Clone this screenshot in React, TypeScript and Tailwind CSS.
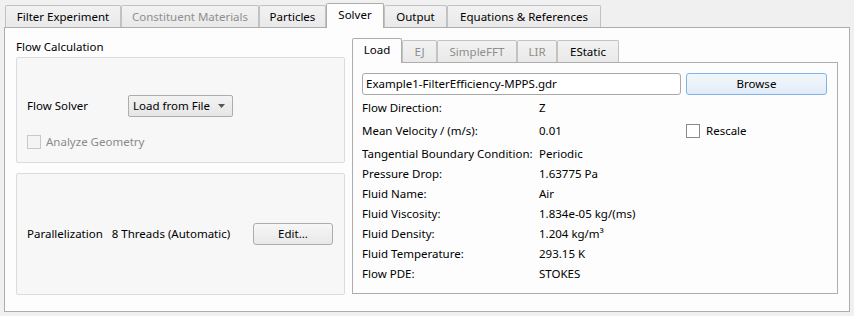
import React from 'react';

type Tab = { label: string; width: string; selected?: boolean; disabled?: boolean };

const mainTabs: Tab[] = [
  { label: 'Filter Experiment', width: 'w-[116px]' },
  { label: 'Constituent Materials', width: 'w-[138px]', disabled: true },
  { label: 'Particles', width: 'w-[67px]' },
  { label: 'Solver', width: 'w-[58px]', selected: true },
  { label: 'Output', width: 'w-[63px]' },
  { label: 'Equations & References', width: 'w-[154px]' },
];

const innerTabs: Tab[] = [
  { label: 'Load', width: 'w-[50px]', selected: true },
  { label: 'EJ', width: 'w-[35px]', disabled: true },
  { label: 'SimpleFFT', width: 'w-[80px]', disabled: true },
  { label: 'LIR', width: 'w-[40px]', disabled: true },
  { label: 'EStatic', width: 'w-[62px]' },
];

function TabButton({ tab }: { tab: Tab }) {
  if (tab.selected) {
    return (
      <div
        className={`${tab.width} h-[25px] -mb-px relative z-10 flex items-center justify-center border border-b-0 border-[#adadad] rounded-t-[2px] bg-[#fdfdfd] pb-[2px]`}
      >
        {tab.label}
      </div>
    );
  }
  return (
    <div
      className={`${tab.width} h-[22px] flex items-center justify-center border border-b-0 border-[#c2c2c2] rounded-t-[2px] bg-gradient-to-b from-[#f2f2f2] to-[#e9e9e9] ${
        tab.disabled ? 'text-[#8e8e8e]' : 'text-black'
      }`}
    >
      {tab.label}
    </div>
  );
}

function Checkbox({ disabled }: { disabled?: boolean }) {
  return (
    <div
      className={`w-[14px] h-[14px] shrink-0 border ${
        disabled ? 'border-[#c8c8c8] bg-[#f4f4f4]' : 'border-[#8a8a8a] bg-white'
      }`}
    />
  );
}

const rows: { label: string; value: string; h: string }[] = [
  { label: 'Flow Direction:', value: 'Z', h: 'h-[20px] leading-[20px]' },
  { label: 'Mean Velocity / (m/s):', value: '0.01', h: 'h-[26px] leading-[26px]' },
  { label: 'Tangential Boundary Condition:', value: 'Periodic', h: 'h-[20px] leading-[20px]' },
  { label: 'Pressure Drop:', value: '1.63775 Pa', h: 'h-[20px] leading-[20px]' },
  { label: 'Fluid Name:', value: 'Air', h: 'h-[20px] leading-[20px]' },
  { label: 'Fluid Viscosity:', value: '1.834e-05 kg/(ms)', h: 'h-[20px] leading-[20px]' },
  { label: 'Fluid Density:', value: '1.204 kg/m³', h: 'h-[20px] leading-[20px]' },
  { label: 'Fluid Temperature:', value: '293.15 K', h: 'h-[20px] leading-[20px]' },
  { label: 'Flow PDE:', value: 'STOKES', h: 'h-[20px] leading-[20px]' },
];

export default function App() {
  return (
    <div className="w-[854px] h-[316px] bg-[#f0f0f0] pt-[3px] pl-[4px] font-['Noto_Sans',sans-serif] text-[11.5px] text-black">
      {/* main tabs */}
      <div className="flex items-end h-[24px] pl-[1px]">
        {mainTabs.map((t) => (
          <TabButton key={t.label} tab={t} />
        ))}
      </div>

      <div className="w-[846px] h-[285px] border border-[#adadad] bg-[#fdfdfd] flex pl-[11px]">
        {/* left column */}
        <div className="w-[329px] pt-[11px] flex flex-col">
          <div className="h-[16px] leading-[16px]">Flow Calculation</div>
          <div className="mt-[2px] h-[106px] border border-[#dcdcdc] rounded-[2px] bg-[#f7f7f7] pl-[10px] pt-[37px]">
            <div className="flex items-center h-[22px]">
              <span className="w-[101px] shrink-0">Flow Solver</span>
              <div className="w-[105px] h-[22px] border border-[#adadad] rounded-[2px] bg-gradient-to-b from-[#f3f3f3] to-[#e6e6e6] flex items-center pl-[4px] pr-[7px] justify-between">
                <span>Load from File</span>
                <svg width="7" height="4" viewBox="0 0 7 4">
                  <path d="M0 0 L7 0 L3.5 4 Z" fill="#555" />
                </svg>
              </div>
            </div>
            <div className="mt-[16px] flex items-center gap-[5px] text-[#8a8a8a]">
              <Checkbox disabled />
              <span>Analyze Geometry</span>
            </div>
          </div>
          <div className="mt-[10px] h-[122px] border border-[#dcdcdc] rounded-[2px] bg-[#f7f7f7] pl-[10px] pr-[11px] flex items-center">
            <span className="shrink-0 whitespace-nowrap mr-[9px]">Parallelization</span>
            <span className="flex-1 whitespace-nowrap">8 Threads (Automatic)</span>
            <div className="w-[80px] h-[22px] shrink-0 border border-[#adadad] rounded-[3px] bg-gradient-to-b from-[#f7f7f7] to-[#e8e8e8] flex items-center justify-center">
              Edit...
            </div>
          </div>
        </div>

        {/* right column */}
        <div className="ml-[7px] w-[486px] pt-[10px] flex flex-col">
          <div className="flex items-end h-[24px]">
            {innerTabs.map((t) => (
              <TabButton key={t.label} tab={t} />
            ))}
          </div>
          <div className="h-[232px] border border-[#adadad] bg-[#fdfdfd] pl-[9px] pr-[10px] pt-[10px]">
            <div className="flex gap-[5px]">
              <div className="w-[319px] h-[22px] border border-[#a8a8a8] rounded-[3px] bg-white flex items-center pl-[3px]">
                Example1-FilterEfficiency-MPPS.gdr
              </div>
              <div className="w-[141px] h-[22px] border border-[#7eb4ea] rounded-[3px] bg-gradient-to-b from-[#f2f7fc] to-[#e2ecf7] flex items-center justify-center">
                Browse
              </div>
            </div>
            <div className="mt-[3px] grid grid-cols-[177px_147px_1fr]">
              {rows.map((r) => (
                <React.Fragment key={r.label}>
                  <div className={`${r.h} whitespace-nowrap`}>{r.label}</div>
                  <div className={`${r.h} whitespace-nowrap`}>{r.value}</div>
                  <div className={`${r.h} flex items-center gap-[6px]`}>
                    {r.label.startsWith('Mean') && (
                      <>
                        <Checkbox />
                        <span>Rescale</span>
                      </>
                    )}
                  </div>
                </React.Fragment>
              ))}
            </div>
          </div>
        </div>
      </div>
    </div>
  );
}
